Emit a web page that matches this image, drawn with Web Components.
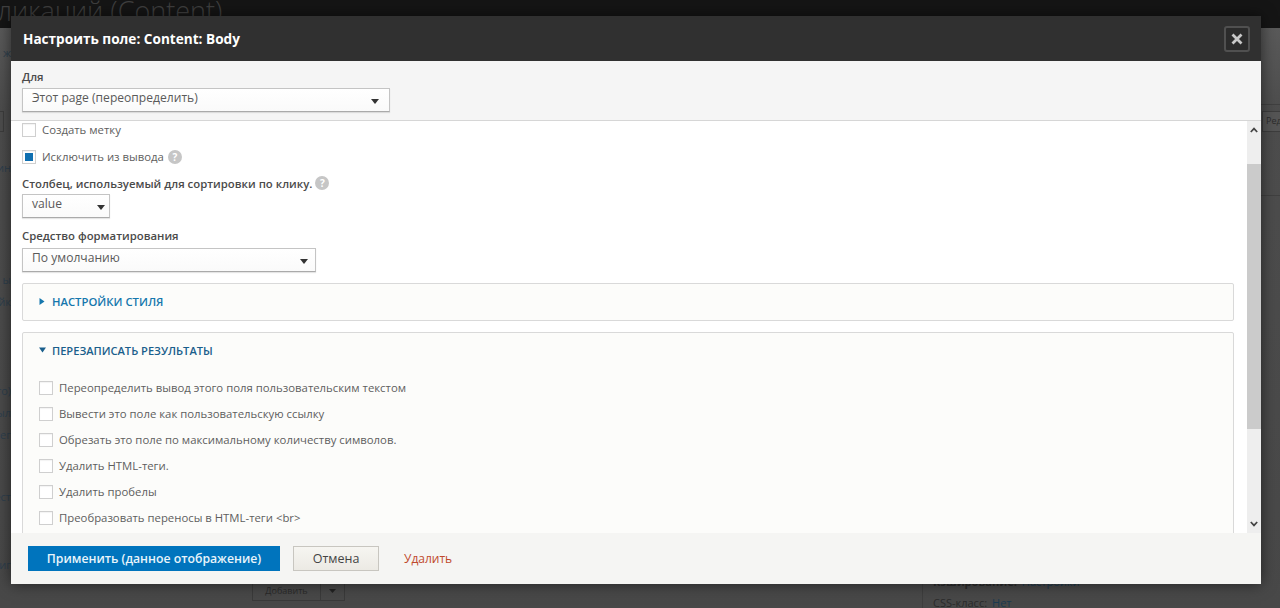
<!DOCTYPE html>
<html lang="ru">
<head>
<meta charset="utf-8">
<title>Настроить поле</title>
<style>
  html, body { margin: 0; padding: 0; height: 608px; overflow: hidden; background: #4a4a4a; }
  body { font-family: "Open Sans", "Liberation Sans", sans-serif; font-size: 11.35px; color: #4d4d4d; }
</style>
</head>
<body>
<page-backdrop>
  <config-dialog heading="Настроить поле: Content: Body">
    <div slot="top">
      <form-select label="Для" gap="3" width="368" arrow="11" value="Этот page (переопределить)"></form-select>
    </div>

    <form-check top="1">Создать метку</form-check>
    <form-check top="13" checked help>Исключить из вывода</form-check>
    <field-label top="11" help>Столбец, используемый для сортировки по клику.</field-label>
    <form-select top="3" width="88" arrow="5" value="value"></form-select>
    <form-select top="10" label="Средство форматирования" width="294" arrow="8" value="По умолчанию"></form-select>
    <fold-set top="11" legend="Настройки стиля"></fold-set>
    <fold-set top="11" legend="Перезаписать результаты" open>
      <form-check>Переопределить вывод этого поля пользовательским текстом</form-check>
      <form-check top="12">Вывести это поле как пользовательскую ссылку</form-check>
      <form-check top="12">Обрезать это поле по максимальному количеству символов.</form-check>
      <form-check top="12">Удалить HTML-теги.</form-check>
      <form-check top="12">Удалить пробелы</form-check>
      <form-check top="12">Преобразовать переносы в HTML-теги &lt;br&gt;</form-check>
    </fold-set>

    <action-button slot="actions" kind="primary">Применить (данное отображение)</action-button>
    <action-button slot="actions">Отмена</action-button>
    <action-button slot="actions" kind="danger">Удалить</action-button>
  </config-dialog>
</page-backdrop>

<script>
const ARROW = '<svg width="8" height="5" viewBox="0 0 8 5"><path d="M0 0h8L4 5z" fill="#333"/></svg>';

class PageBackdrop extends HTMLElement {
  connectedCallback() {
    this.attachShadow({ mode: 'open' });
    this.shadowRoot.innerHTML = `
      <style>
        :host { display: block; position: relative; width: 1280px; height: 608px; overflow: hidden;
          background: linear-gradient(#5a5a5a 28px, #4d4d4d 110px, #484848); }
        header { height: 28px; background: #151515; overflow: hidden; }
        h1 { margin: -8px 0 0 -50px; font: 300 27px/38px "Open Sans", sans-serif; color: #3f3f3f; white-space: nowrap; }
        .side { position: absolute; top: 0; width: 11px; height: 608px; overflow: hidden; color: #2e3f4d; font-size: 11px; white-space: nowrap; }
        .side span { position: absolute; right: 0; }
        .left { left: 0; }
        .right { left: 1261px; width: 19px; }
        .stub { position: absolute; left: 0; top: 111px; width: 3px; height: 19px; border: 1px solid #3d3d3d; border-left: 0; }
        .edit { position: absolute; left: 1px; top: 111px; height: 19px; width: 30px; padding-left: 3px; border: 1px solid #3d3d3d;
          background: #555; color: #2c2c2c; font-size: 9px; line-height: 18px; }
        .rule { position: absolute; left: 0; right: 0; height: 1px; background: #404040; }
        .add { position: absolute; left: 252px; top: 581px; display: flex; height: 18px; border: 1px solid #3a3a3a; font-size: 9px; line-height: 18px; color: #2a2a2a; }
        .add b { font-weight: 400; width: 67px; text-align: center; border-right: 1px solid #3a3a3a; }
        .add i { width: 23px; display: flex; align-items: center; justify-content: center; }
        .info { position: absolute; left: 922px; top: 570px; width: 358px; height: 38px; border-left: 1px solid #3e3e3e; font-size: 11px; color: #2b2b2b; }
        .info span { position: absolute; left: 10px; white-space: nowrap; }
        .info a { color: #1b3a50; margin-left: 5px; }
      </style>
      <header><h1>Публикаций (Content)</h1></header>
      <div class="side left">
        <span style="top:45px">е ж</span>
        <div class="stub"></div>
        <span style="top:160px">ин</span>
        <span style="top:272px">ы</span>
        <span style="top:294px">йк</span>
        <span style="top:383px">го)</span>
        <span style="top:405px">ыл</span>
        <span style="top:427px">ег</span>
        <span style="top:489px">ест</span>
        <span style="top:557px">иг</span>
      </div>
      <div class="side right">
        <div class="rule" style="top:104px"></div>
        <div class="edit">Ред</div>
        <div class="rule" style="top:195px"></div>
      </div>
      <div class="add"><b>Добавить</b><i><svg width="7" height="4" viewBox="0 0 7 4"><path d="M0 0h7L3.5 4z" fill="#222"/></svg></i></div>
      <div class="info">
        <span style="top:4px;font-weight:700">Кэширование:<a style="font-weight:400">Настройки</a></span>
        <span style="top:25px">CSS-класс:<a>Нет</a></span>
      </div>
      <slot></slot>
    `;
  }
}

class ConfigDialog extends HTMLElement {
  connectedCallback() {
    this.attachShadow({ mode: 'open' });
    this.shadowRoot.innerHTML = `
      <style>
        :host { display: flex; flex-direction: column; position: absolute; left: 11px; top: 16px; width: 1250px; height: 568px;
          background: #f5f5f3; box-shadow: 0 0 14px rgba(0,0,0,.55); }
        .title { height: 45px; flex: none; display: flex; align-items: center; justify-content: space-between; padding: 0 11px 0 12px;
          background: #303030; color: #fff; font-size: 13.6px; font-weight: 700; box-sizing: border-box; }
        .close { width: 26px; height: 26px; box-sizing: border-box; border: 2px solid #505050; border-radius: 3px; background: #2b2b2b;
          display: flex; align-items: center; justify-content: center; }
        .top { height: 60px; flex: none; box-sizing: border-box; padding: 8px 11px 0; background: #f5f5f5; border-bottom: 1px solid #d6d6d6; }
        .body { flex: 1; min-height: 0; display: flex; background: #fff; }
        .content { flex: 1; min-width: 0; overflow: hidden; padding: 1px 13px 0 11px; }
        .bar { width: 14px; flex: none; background: #eee; position: relative; }
        .bar .thumb { position: absolute; left: 0; right: 0; top: 43px; height: 265px; background: #cbcbcb; }
        .bar svg { position: absolute; left: 3px; }
        .foot { height: 51px; flex: none; box-sizing: border-box; padding: 13px 17px 0; display: flex; align-items: flex-start; gap: 13px; background: #f5f5f3; }
      </style>
      <div class="title">
        <span>${this.getAttribute('heading')}</span>
        <span class="close"><svg width="12" height="12" viewBox="0 0 12 12"><path d="M1.5 1.5l9 9M10.5 1.5l-9 9" stroke="#c8c8c8" stroke-width="2.8" fill="none"/></svg></span>
      </div>
      <div class="top"><slot name="top"></slot></div>
      <div class="body">
        <div class="content"><slot></slot></div>
        <div class="bar">
          <svg style="top:6px" width="8" height="6" viewBox="0 0 8 6"><path d="M.8 5L4 1.6 7.2 5" stroke="#444" stroke-width="1.7" fill="none"/></svg>
          <div class="thumb"></div>
          <svg style="top:400px" width="8" height="6" viewBox="0 0 8 6"><path d="M.8 1L4 4.4 7.2 1" stroke="#444" stroke-width="1.7" fill="none"/></svg>
        </div>
      </div>
      <div class="foot"><slot name="actions"></slot></div>
    `;
  }
}

class HelpIcon extends HTMLElement {
  connectedCallback() {
    this.attachShadow({ mode: 'open' });
    this.shadowRoot.innerHTML = `
      <style>
        :host { display: inline-flex; width: 14px; height: 14px; border-radius: 50%; background: #c6c6c6; color: #fff;
          align-items: center; justify-content: center; font: 700 10px/14px "Open Sans", sans-serif; flex: none; }
      </style>?`;
  }
}

class FieldLabel extends HTMLElement {
  connectedCallback() {
    this.attachShadow({ mode: 'open' });
    const help = this.hasAttribute('help') ? '<help-icon></help-icon>' : '';
    this.shadowRoot.innerHTML = `
      <style>
        :host { display: flex; align-items: center; gap: 3px; margin-top: ${this.getAttribute('top') || 0}px;
          height: 16px; font-weight: 600; font-size: 11.35px; color: #4a4a4a; white-space: nowrap; }
      </style>
      <slot></slot>${help}
    `;
  }
}

class FormSelect extends HTMLElement {
  connectedCallback() {
    this.attachShadow({ mode: 'open' });
    const label = this.getAttribute('label');
    this.shadowRoot.innerHTML = `
      <style>
        :host { display: block; margin-top: ${this.getAttribute('top') || 0}px; }
        label { display: block; height: 16px; line-height: 16px; font-weight: 600; font-size: 11.35px; color: #4a4a4a; margin-bottom: ${this.getAttribute('gap') || 4}px; }
        .box { width: ${this.getAttribute('width')}px; height: 24px; box-sizing: border-box; border: 1px solid #c4c4c4; border-bottom-color: #aaa;
          background: linear-gradient(#fff, #fafafa); box-shadow: 0 1px 1px rgba(0,0,0,.1);
          display: flex; align-items: center; justify-content: space-between;
          padding: 0 ${this.getAttribute('arrow') - 1}px 5px 9px; color: #5a5a5a; font-size: 12.1px; }
        svg { margin-top: 8px; }
      </style>
      ${label ? `<label>${label}</label>` : ''}
      <div class="box"><span>${this.getAttribute('value')}</span>${ARROW}</div>
    `;
  }
}

class FormCheck extends HTMLElement {
  connectedCallback() {
    this.attachShadow({ mode: 'open' });
    const checked = this.hasAttribute('checked');
    const help = this.hasAttribute('help') ? '<help-icon></help-icon>' : '';
    this.shadowRoot.innerHTML = `
      <style>
        :host { display: flex; align-items: center; height: 14px; margin-top: ${this.getAttribute('top') || 0}px; color: #5e5e5e; white-space: nowrap; }
        .box { width: 14px; height: 14px; box-sizing: border-box; border: 1px solid #cfcfcf; background: #fff; flex: none;
          margin-right: 6px; display: flex; align-items: center; justify-content: center; box-shadow: inset 0 1px 1px rgba(0,0,0,.05); }
        .box i { width: 8px; height: 8px; background: #0f6fb0; }
        .text { margin-top: -2px; }
        help-icon { margin-left: 4px; }
      </style>
      <span class="box">${checked ? '<i></i>' : ''}</span><span class="text"><slot></slot></span>${help}
    `;
  }
}

class FoldSet extends HTMLElement {
  connectedCallback() {
    this.attachShadow({ mode: 'open' });
    const open = this.hasAttribute('open');
    const color = open ? '#1a5f8c' : '#1577ad';
    const arrow = open
      ? `<svg width="7" height="6" viewBox="0 0 7 6"><path d="M0 .5h7L3.5 5.5z" fill="${color}"/></svg>`
      : `<svg width="6" height="7" viewBox="0 0 6 7"><path d="M.5 0v7L5.5 3.5z" fill="${color}"/></svg>`;
    this.shadowRoot.innerHTML = `
      <style>
        :host { display: block; margin-top: ${this.getAttribute('top') || 0}px; background: #fcfcfa; border: 1px solid #d9d9d9; border-radius: 2px; box-sizing: border-box; }
        .legend { height: 36px; box-sizing: border-box; padding: 0 0 2px 16px; display: flex; align-items: center; gap: ${open ? 6 : 7}px; color: ${color};
          font-weight: 600; font-size: ${open ? 11.1 : 11.3}px; text-transform: uppercase; }
        .inner { padding: 12px 16px 16px; }
      </style>
      <div class="legend">${arrow}<span>${this.getAttribute('legend')}</span></div>
      ${open ? '<div class="inner"><slot></slot></div>' : ''}
    `;
  }
}

class ActionButton extends HTMLElement {
  connectedCallback() {
    this.attachShadow({ mode: 'open' });
    const kind = this.getAttribute('kind');
    const css = {
      primary: 'background:#0074bd;color:#e8f4fb;font-weight:600;font-size:12.26px;width:252px;justify-content:center;',
      danger: 'color:#c0492c;font-size:12px;padding:0 0 0 12px;'
    }[kind] || 'background:linear-gradient(#f6f5f1,#eceae4);color:#444;font-size:12.5px;width:86px;justify-content:center;border:1px solid #c8c6c0;box-sizing:border-box;';
    this.shadowRoot.innerHTML = `
      <style>
        :host { display: flex; align-items: center; height: 25px; white-space: nowrap; ${css} }
      </style>
      <slot></slot>
    `;
  }
}

customElements.define('page-backdrop', PageBackdrop);
customElements.define('config-dialog', ConfigDialog);
customElements.define('help-icon', HelpIcon);
customElements.define('field-label', FieldLabel);
customElements.define('form-select', FormSelect);
customElements.define('form-check', FormCheck);
customElements.define('fold-set', FoldSet);
customElements.define('action-button', ActionButton);
</script>
</body>
</html>
